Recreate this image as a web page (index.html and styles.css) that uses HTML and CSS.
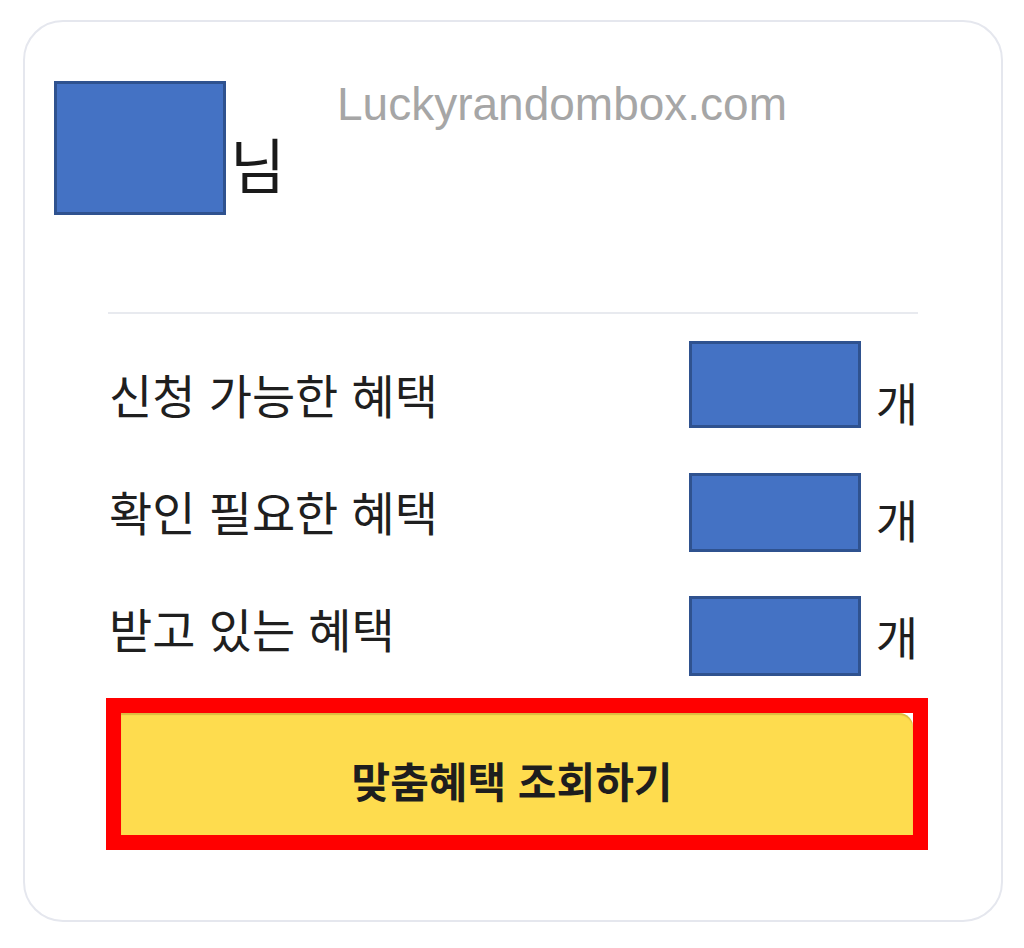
FILE: index.html
```html
<!DOCTYPE html>
<html lang="ko">
<head>
<meta charset="utf-8">
<title>혜택</title>
<link rel="stylesheet" href="styles.css">
</head>
<body>
<div class="card">
  <div class="watermark">Luckyrandombox.com</div>
  <div class="header">
    <div class="name-box"></div>
    <span class="honorific">님</span>
  </div>
  <div class="divider"></div>
  <div class="rows">
    <div class="row">
      <span class="label">신청 가능한 혜택</span>
      <span class="value"><span class="num"></span><span class="unit">개</span></span>
      <div class="redact redact-1"></div>
    </div>
    <div class="row">
      <span class="label">확인 필요한 혜택</span>
      <span class="value"><span class="num"></span><span class="unit">개</span></span>
      <div class="redact redact-2"></div>
    </div>
    <div class="row">
      <span class="label">받고 있는 혜택</span>
      <span class="value"><span class="num"></span><span class="unit">개</span></span>
      <div class="redact redact-3"></div>
    </div>
  </div>
  <div class="frame">
    <button class="cta">맞춤혜택 조회하기</button>
  </div>
</div>
</body>
</html>
```

FILE: styles.css
```css
* { box-sizing: border-box; }
html, body { margin: 0; padding: 0; background: #ffffff; }
body {
  font-family: "Noto Sans CJK KR", "Noto Sans", sans-serif;
  color: #1f1f1f;
}
.card {
  position: relative;
  margin: 20px 0 0 23px;
  width: 980px;
  height: 902px;
  border: 2px solid #e5e7ee;
  border-radius: 40px;
  padding: 59px 83px 0 29px;
}
.watermark {
  position: absolute;
  left: 312px;
  top: 59px;
  font-family: "Liberation Sans", Arial, sans-serif;
  font-size: 46px;
  line-height: 1;
  color: #a6a6a6;
}
.header {
  display: flex;
  align-items: flex-end;
  height: 134px;
}
.name-box {
  width: 172px;
  height: 134px;
  background: #4472c4;
  border: 3px solid #2f528f;
}
.honorific {
  font-size: 60px;
  line-height: 1;
  margin-left: 4px;
  margin-bottom: 22px;
  color: #1a1a1a;
}
.divider {
  margin: 97px 0 0 54px;
  height: 2px;
  background: #e8eaef;
}
.rows {
  margin: 21px 0 0 54px;
}
.row {
  position: relative;
  display: flex;
  align-items: center;
  justify-content: space-between;
  height: 117px;
}
.label {
  font-size: 47px;
  line-height: 1;
  margin-left: 1px;
  color: #1f1f1f;
}
.value {
  display: flex;
  align-items: center;
}
.num {
  width: 172px;
}
.unit {
  font-size: 46px;
  line-height: 1;
  margin-left: 17px;
  margin-top: 14px;
}
.redact {
  position: absolute;
  right: 57px;
  width: 172px;
  background: #4472c4;
  border: 3px solid #2f528f;
}
.redact-1 { top: 6px; height: 87px; }
.redact-2 { top: 21px; height: 79px; }
.redact-3 { top: 27px; height: 80px; }
.frame {
  margin: 12px 0 0 52px;
  width: 822px;
  height: 152px;
  border: 15px solid #ff0000;
  background: #ffffff;
}
.cta {
  display: block;
  width: 792px;
  height: 122px;
  margin: 0;
  border: none;
  border-top-right-radius: 14px;
  background: #fedc4e;
  box-shadow: inset 0 2px 1px rgba(160, 120, 40, 0.35);
  font-family: "Noto Sans CJK KR", "Noto Sans", sans-serif;
  font-size: 42px;
  font-weight: 700;
  color: #1e1e1e;
  line-height: 1;
  padding: 12px 10px 0 0;
}
```
